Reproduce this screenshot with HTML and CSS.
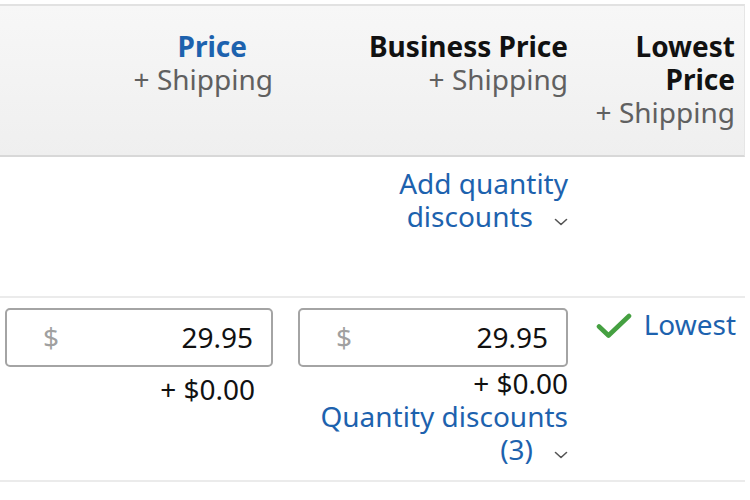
FILE: index.html
```html
<!DOCTYPE html>
<html>
<head>
<meta charset="utf-8">
<link rel="stylesheet" href="styles.css">
</head>
<body>
<div class="table">
  <div class="row head">
    <div class="cell c1">
      <div class="h-title link price-title">Price</div>
      <div class="h-sub">+ Shipping</div>
    </div>
    <div class="cell c2">
      <div class="h-title">Business Price</div>
      <div class="h-sub">+ Shipping</div>
    </div>
    <div class="cell c3">
      <div class="h-title">Lowest Price</div>
      <div class="h-sub">+ Shipping</div>
    </div>
  </div>
  <div class="row r1">
    <div class="cell c1"></div>
    <div class="cell c2">
      <a class="link">Add quantity <span class="nowrap">discounts<svg class="chev" viewBox="0 0 14 8" width="14" height="8"><path d="M1.5 1.5 L7 6.5 L12.5 1.5" fill="none" stroke="#555" stroke-width="1.6" stroke-linecap="round" stroke-linejoin="round"/></svg></span></a>
    </div>
    <div class="cell c3"></div>
  </div>
  <div class="row r2">
    <div class="cell c1">
      <div class="price-input"><span class="cur">$</span><span class="val">29.95</span></div>
      <div class="ship ship-gap">+ $0.00</div>
    </div>
    <div class="cell c2">
      <div class="price-input"><span class="cur">$</span><span class="val">29.95</span></div>
      <div class="ship ship-flush">+ $0.00</div>
      <a class="link">Quantity discounts <span class="nowrap">(3)<svg class="chev" viewBox="0 0 14 8" width="14" height="8"><path d="M1.5 1.5 L7 6.5 L12.5 1.5" fill="none" stroke="#555" stroke-width="1.6" stroke-linecap="round" stroke-linejoin="round"/></svg></span></a>
    </div>
    <div class="cell c3">
      <div class="lowest">
        <svg class="check" viewBox="0 0 36 26" width="36" height="26"><path d="M3 13.5 L12.5 22.5 L33 3" fill="none" stroke="#45a041" stroke-width="4.6" stroke-linecap="round" stroke-linejoin="round"/></svg>
        <span class="link">Lowest</span>
      </div>
    </div>
  </div>
</div>
</body>
</html>
```

FILE: styles.css
```css
html, body {
  margin: 0;
  padding: 0;
  background: #ffffff;
}

body {
  font-family: "Noto Sans", "Open Sans", sans-serif;
  font-size: 28px;
  line-height: 33px;
  color: #111111;
  padding-top: 4px;
}

.table {
  width: 745px;
}

.row {
  display: grid;
  grid-template-columns: 268px 270px 1fr;
  column-gap: 25px;
  padding: 0 9px 0 5px;
  box-sizing: border-box;
}

.cell {
  text-align: right;
}

.head {
  background: linear-gradient(#f7f7f7, #efefef);
  border-top: 2px solid #e2e2e2;
  border-bottom: 2px solid #d8d8d8;
  border-right: 1px solid #e6e6e6;
  padding-top: 24px;
  padding-bottom: 26px;
}

.h-title {
  font-weight: 700;
  color: #111111;
}

.price-title {
  color: #1d62ae;
  margin-right: 26px;
}

.h-sub {
  color: #606060;
}

.link {
  color: #1d62ae;
}

.nowrap {
  white-space: nowrap;
}

.chev {
  margin-left: 21px;
  vertical-align: 1px;
}

.r1 {
  padding-top: 10px;
  height: 141px;
  border-bottom: 2px solid #ebebeb;
}

.r2 {
  padding-top: 10px;
  padding-bottom: 14px;
  border-bottom: 2px solid #ebebeb;
}

.price-input {
  display: flex;
  align-items: center;
  justify-content: space-between;
  height: 59px;
  box-sizing: border-box;
  border: 2px solid #a4a4a4;
  border-radius: 5px;
  padding: 0 18px 0 36px;
  background: #ffffff;
}

.cur {
  color: #a0a0a0;
}

.val {
  color: #111111;
}

.ship {
  color: #111111;
}

.ship-gap {
  margin-top: 6px;
  padding-right: 18px;
}

.ship-flush {
  margin-top: 0;
}

.lowest {
  display: flex;
  justify-content: flex-end;
  align-items: flex-start;
  gap: 12px;
}

.check {
  margin-top: 5px;
}
```
